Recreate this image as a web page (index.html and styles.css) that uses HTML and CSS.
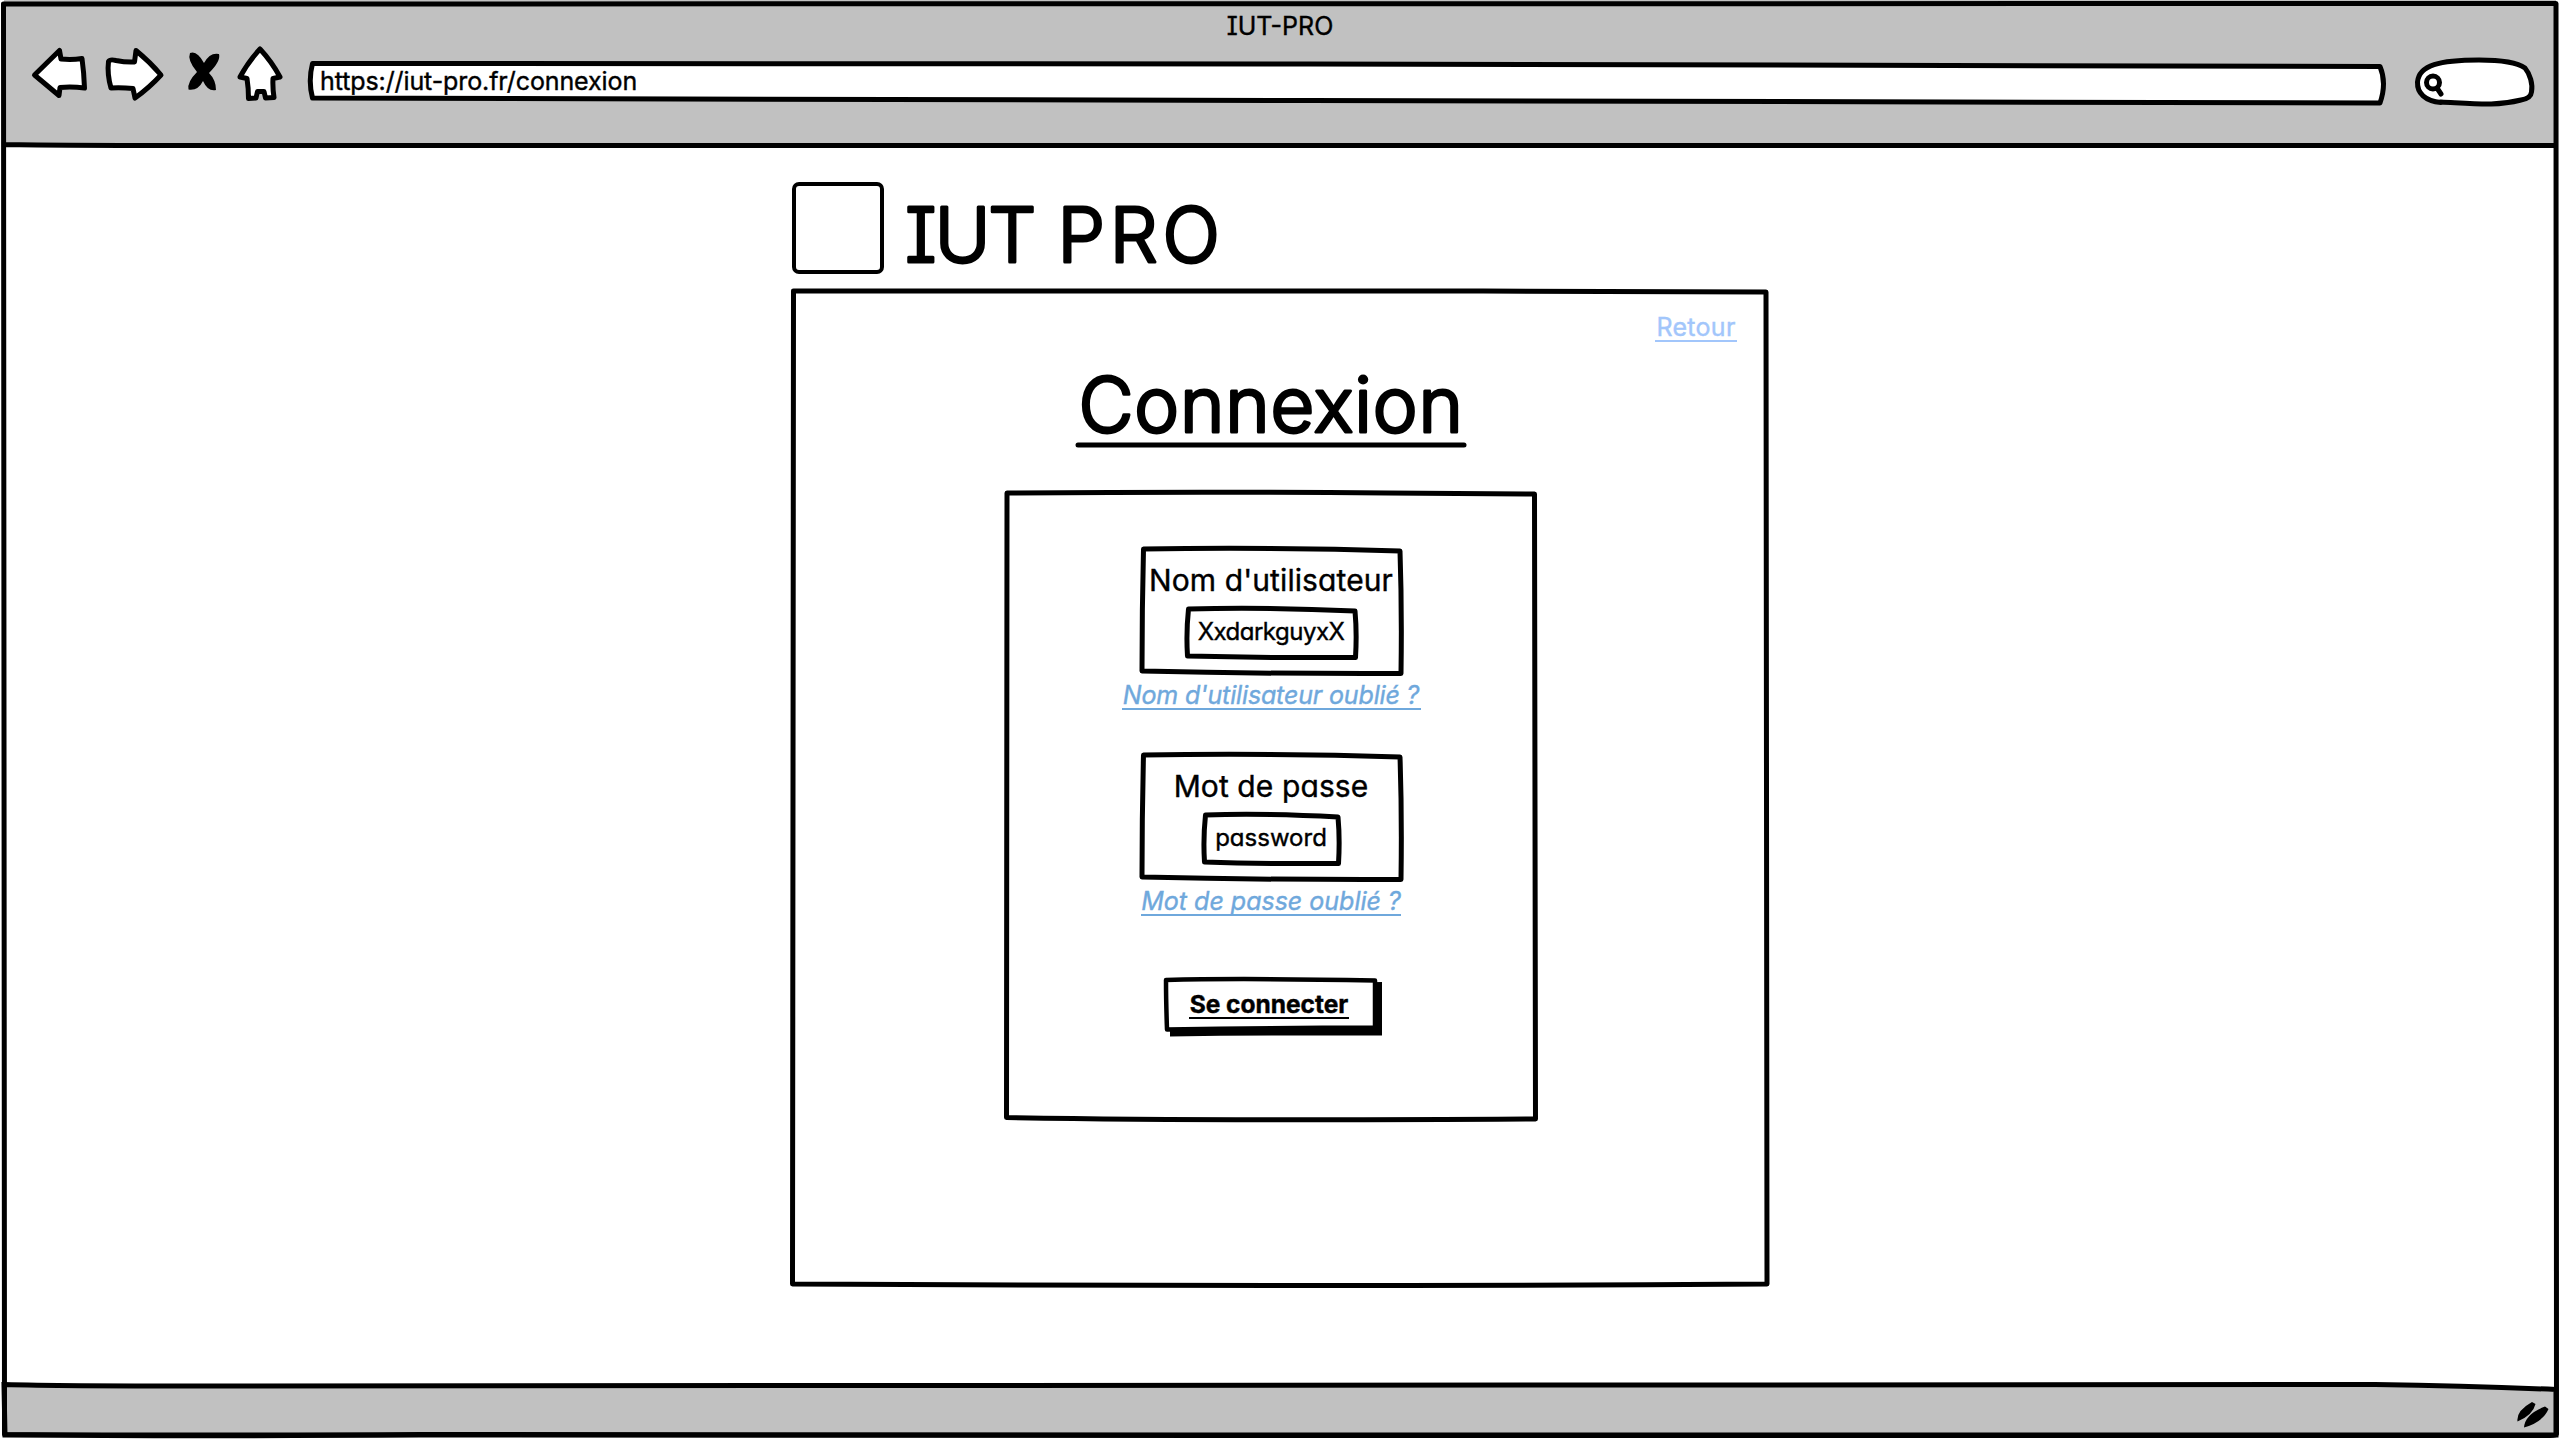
FILE: index.html
```
<!DOCTYPE html>
<html lang="fr">
<head>
<meta charset="utf-8">
<title>IUT-PRO</title>
<link rel="stylesheet" href="styles.css">
</head>
<body>
<div class="window">
  <header class="chrome">
    <div class="chrome-title">IUT-PRO</div>
    <nav class="toolbar">
      <svg class="icon back" width="56" height="66" viewBox="32 48 56 66"><path d="M34.500 75L59.500 50.500L61 59Q72 60 82 58.500Q84 73 84.500 88Q72 86.500 60 87.500L59 95.500Z"/></svg>
      <svg class="icon forward" width="58" height="66" viewBox="106 48 58 66"><path d="M111 88Q107 74 108.500 61.500Q110 59 116 60.500Q126 62.500 134.500 62L136 50.500Q150 62 161 75Q149 88 135 98L133 88.500Q122 87.500 111 88Z"/></svg>
      <svg class="icon stop" width="32" height="66" viewBox="188 48 32 66"><path class="solid" d="M190 53Q197 50 204 63Q210 52 219 54Q221 61 209 73Q216 80 216 90Q208 92 203 81Q198 91 188.500 89.500Q187 82 197 72Q187 60 190 53Z"/></svg>
      <svg class="icon home" width="46" height="66" viewBox="238 48 46 66"><path d="M260 49Q272 62 280 77L273 78.500Q272.500 88 274 97.500L265.500 98L264 91.500H257.500L256 98L248.500 98.500Q248.500 88 247 78.500L240 77Q248 62 260 49Z"/></svg>
      <div class="address">
        <svg class="frame" viewBox="0 0 2076 66" preserveAspectRatio="none"><path d="M3.500 15.500L1000 16L2071 18.500Q2078 35 2071 55L1000 52.500L3.500 50Q-1 33 3.500 15.500Z"/></svg>
        <span class="address-text">https://iut-pro.fr/connexion</span>
      </div>
      <svg class="icon search" width="120" height="66" viewBox="2415 48 120 66"><path d="M2441 102.500C2425 101 2417 93 2417.500 82C2419 65 2440 60 2479 60C2505 60 2518 63 2525 68C2530 74 2533 84 2531.500 92C2531 97 2527 99 2521 100C2497 106 2480 104 2441 102Z"/><circle cx="2433" cy="82.500" r="6.500"/><path d="M2437 88L2441 94"/></svg>
    </nav>
  </header>

  <main class="page">
    <div class="brand">
      <div class="brand-logo"></div>
      <svg class="display" width="330" height="92" viewBox="900 182 330 92"><text x="905" y="261.500"><tspan letter-spacing="-2">IUT </tspan><tspan x="1057.500" letter-spacing="4.800">PRO</tspan></text></svg>
    </div>

    <section class="panel">
      <svg class="frame" viewBox="0 0 974 993" preserveAspectRatio="none"><path d="M0.500 0Q400 -1 690 0L973 1Q974.500 400 974 993Q500 996 -0.500 993Q-1 500 0.500 0Z"/></svg>
      <a class="link link-return">Retour</a>
      <svg class="display display-title" width="400" height="90" viewBox="1071 360 400 90"><text x="1078.500" y="431.800" letter-spacing="0.800">Connexion</text><path d="M1078 445H1464"/></svg>

      <form class="login">
        <svg class="frame" viewBox="0 0 528 625" preserveAspectRatio="none"><path d="M0 0Q200 -1.500 380 0L527.500 1Q529 300 528.500 626Q200 628 -0.500 624.500Q0 300 0 0Z"/></svg>
        <div class="field">
          <svg class="frame" viewBox="0 0 258 123"><path d="M1.500 0Q130 -2 258 2Q260 60 259 124.500Q130 125 0 122Q0 60 1.500 0Z"/></svg>
          <label class="field-label">Nom d'utilisateur</label>
          <div class="field-input field-user">
            <svg class="frame" viewBox="0 0 168 47"><path d="M1.500 0Q80 -2 168 2Q170 24 168.500 48.500Q80 49 0.500 47Q-1 24 1.500 0Z"/></svg>
            <span>XxdarkguyxX</span>
          </div>
        </div>
        <a class="link link-help link-user">Nom d'utilisateur oublié ?</a>
        <div class="field">
          <svg class="frame" viewBox="0 0 258 123"><path d="M1.500 0Q130 -2 258 2Q260 60 259 124.500Q130 125 0 122Q0 60 1.500 0Z"/></svg>
          <label class="field-label">Mot de passe</label>
          <div class="field-input field-pass">
            <svg class="frame" viewBox="0 0 134 47"><path d="M1.500 0Q60 -2 134 2Q136 24 134.500 48.500Q60 49 0.500 47Q-1 24 1.500 0Z"/></svg>
            <span>password</span>
          </div>
        </div>
        <a class="link link-help link-pass">Mot de passe oublié ?</a>
        <div class="submit">
          <svg class="frame" viewBox="1165 977 212 54"><path class="solid" d="M1170 985L1382 981V1034.500Q1270 1034 1170 1035.500Z"/><path class="face" d="M1166 979Q1240 977 1375 979.500V1026.500Q1270 1027 1167 1028.500Q1166 1000 1166 979Z"/></svg>
          <span class="submit-text">Se connecter</span>
        </div>
      </form>
    </section>
  </main>

  <footer class="status">
    <svg class="status-bar" width="2560" height="55" viewBox="0 1385 2560 55"><path class="bar" d="M4 1384.500Q60 1386 200 1386L2375 1384.500Q2470 1386 2556 1389.500V1435L5 1435Z"/><path class="solid" d="M2517.500 1421.500Q2516 1411 2532 1402L2535.500 1404Q2533 1415 2517.500 1421.500ZM2524 1427.500Q2525 1414 2545 1406.500L2548.500 1409Q2543 1422 2524 1427.500Z"/></svg>
  </footer>

  <svg class="frame window-frame" viewBox="0 0 2560 1440"><path d="M3.500 4L2556 3.500L2556.500 1434Q2556 1435.500 2550 1435.500L1200 1435.500Q700 1436 420 1434.500Q200 1437 4.500 1434.500Q4 700 3.500 4ZM4 144.500Q60 145.500 200 145.500L2556 145.500"/></svg>
</div>
</body>
</html>
```
FILE: styles.css
```
* { box-sizing: border-box; }

body {
  margin: 0;
  background: #fff;
  color: #000;
  font: 400 25px/26px Inter, "Liberation Sans", sans-serif;
  font-feature-settings: "cv11", "cv08";
  -webkit-text-stroke: 0.4px currentColor;
}

svg {
  display: block;
  flex: none;
  overflow: visible;
  -webkit-text-stroke: 0;
}

/* hand-drawn outlines */
.frame {
  position: absolute;
  left: 0;
  top: 0;
  width: 100%;
  height: 100%;
  fill: none;
  stroke: #000;
  stroke-width: 5;
  stroke-linejoin: round;
  pointer-events: none;
}

.solid { fill: #000; stroke: none; }

.window {
  position: relative;
  display: flex;
  flex-direction: column;
  width: 2560px;
  height: 1440px;
  overflow: hidden;
}

/* browser chrome */
.chrome {
  height: 145px;
  margin: 0 4px;
  padding-top: 5px;
  background: #c1c1c1;
}

.chrome-title {
  height: 43px;
  line-height: 43px;
  text-align: center;
}

.toolbar {
  display: flex;
  height: 66px;
  padding: 0 21px 0 28px;
}

.icon {
  fill: #fff;
  stroke: #000;
  stroke-width: 5;
  stroke-linejoin: round;
  stroke-linecap: round;
}

.icon .solid { fill: #000; stroke: none; }
.back { margin-right: 18px; }
.forward { margin-right: 24px; }
.stop { margin-right: 18px; }
.home { margin-right: 25px; }

.address {
  position: relative;
  flex: 1;
  margin-right: 30px;
  padding-left: 11px;
  line-height: 66px;
}

.address .frame { fill: #fff; }

.address-text {
  position: relative;
  letter-spacing: -0.1px;
}

/* page */
.page {
  flex: 1;
  width: 974px;
  margin: 0 auto;
  padding-top: 37px;
}

.brand {
  display: flex;
  gap: 16px;
  height: 92px;
  margin-left: -1px;
}

.brand-logo {
  width: 92px;
  height: 92px;
  border: 4px solid #000;
  border-radius: 7px;
}

.display text {
  font-size: 75.6px;
  font-weight: 300;
  stroke: #000;
  stroke-width: 3px;
  stroke-linejoin: round;
}

.display path {
  stroke: #000;
  stroke-width: 5;
  stroke-linecap: round;
}

.panel {
  position: relative;
  display: flex;
  flex-direction: column;
  align-items: center;
  height: 993px;
  margin-top: 17px;
}

.link {
  border-bottom: 2px solid;
  text-align: center;
  white-space: nowrap;
}

.link-return {
  align-self: flex-end;
  width: 82px;
  margin: 23px 30px 18px 0;
  color: #a2c6fb;
  letter-spacing: 0.3px;
}

.display-title { margin-right: 18px; }

.login {
  position: relative;
  display: flex;
  flex-direction: column;
  align-items: center;
  width: 528px;
  height: 625px;
  margin: 43px 18px 0 0;
  padding-top: 56px;
}

.field {
  position: relative;
  display: flex;
  flex-direction: column;
  align-items: center;
  width: 258px;
  height: 123px;
  padding-top: 13px;
}

.field-label {
  font-size: 30px;
  line-height: 36px;
  letter-spacing: 0.1px;
}

.field-input {
  position: relative;
  height: 47px;
  margin-top: 11px;
  font-size: 24px;
  line-height: 45px;
  text-align: center;
}

.field-user { width: 168px; letter-spacing: -0.5px; }
.field-pass { width: 134px; }

.link-help {
  margin: 10px 0 45px;
  color: #6fa8dc;
  font-style: italic;
}

.link-user { width: 299px; letter-spacing: -0.15px; }
.link-pass { width: 260px; }

.submit {
  position: relative;
  width: 212px;
  height: 54px;
  margin-top: 17px;
  padding: 13px 26px 0 24px;
}

.submit .frame { stroke-width: 4.5; }
.face { fill: #fff; }

.submit-text {
  position: relative;
  display: block;
  width: 160px;
  border-bottom: 2px solid;
  font-size: 24.5px;
  font-weight: 700;
  text-align: center;
  white-space: nowrap;
}

.status { height: 55px; }

.bar {
  fill: #c1c1c1;
  stroke: #000;
  stroke-width: 5;
}
```
